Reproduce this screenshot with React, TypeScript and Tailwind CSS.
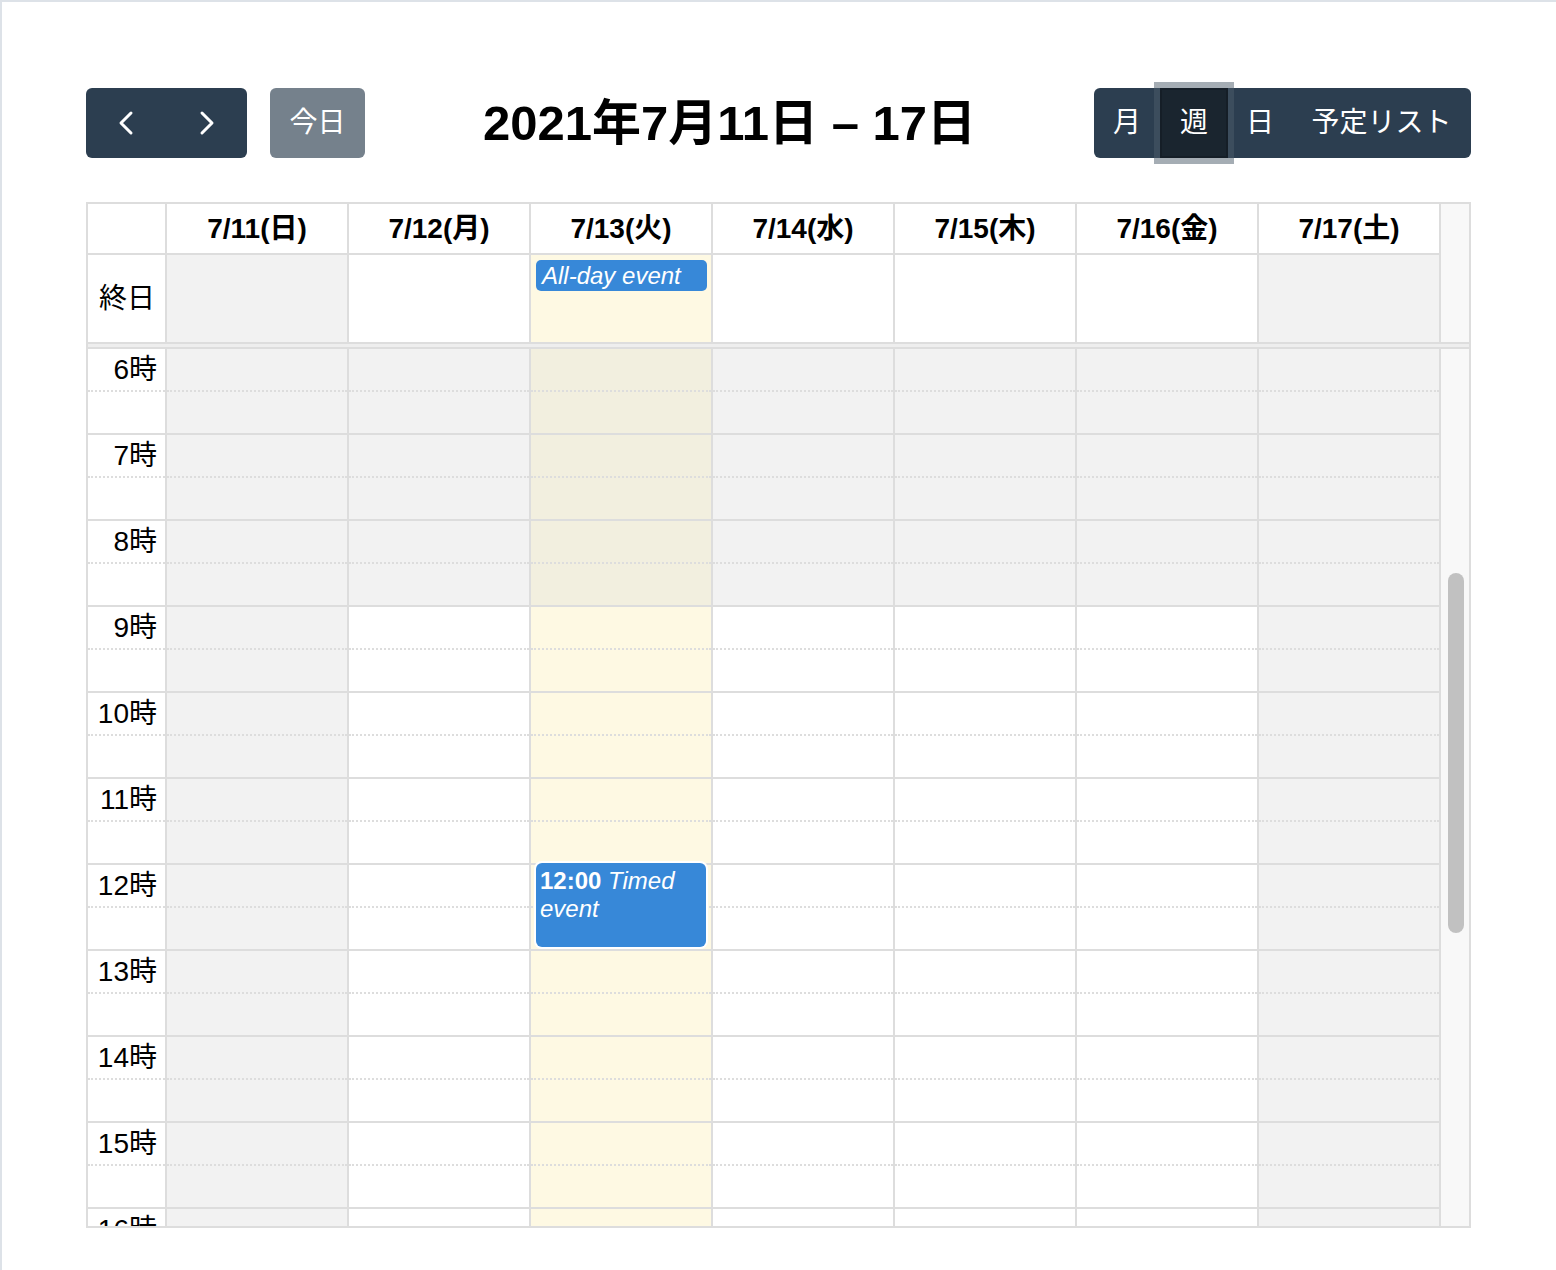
import type { ReactNode } from "react";

type Day = { label: string; weekend?: boolean; today?: boolean };

const days: Day[] = [
  { label: "7/11(日)", weekend: true },
  { label: "7/12(月)" },
  { label: "7/13(火)", today: true },
  { label: "7/14(水)" },
  { label: "7/15(木)" },
  { label: "7/16(金)" },
  { label: "7/17(土)", weekend: true },
];

// half-hour slots from 6:00, the body is clipped at the bottom
const slots = Array.from({ length: 26 }, (_, i) => ({ hour: 6 + Math.floor(i / 2), half: i % 2 === 1, index: i }));

function slotLine(index: number, half: boolean) {
  if (index === 0) return "h-[41px]";
  return half ? "h-[43px] border-t-2 border-dotted border-[#dddddd]" : "h-[43px] border-t-2 border-solid border-[#dddddd]";
}

function slotBg(day: Day, hour: number) {
  const off = day.weekend || hour < 9;
  if (day.today) return off ? "bg-[#f2efdf]" : "bg-[#fef9e3]";
  return off ? "bg-[#f2f2f2]" : "bg-white";
}

function allDayBg(day: Day) {
  if (day.today) return "bg-[#fef9e3]";
  return day.weekend ? "bg-[#f2f2f2]" : "bg-white";
}

function Chevron({ dir }: { dir: "left" | "right" }) {
  return (
    <svg width="16" height="26" viewBox="0 0 16 26" fill="none" aria-hidden>
      <polyline
        points={dir === "left" ? "13,3 3,13 13,23" : "3,3 13,13 3,23"}
        stroke="white"
        strokeWidth="3"
        strokeLinecap="round"
        strokeLinejoin="round"
      />
    </svg>
  );
}

function ViewButton({ children, className }: { children: ReactNode; className: string }) {
  return <button type="button" className={`flex h-[70px] items-center justify-center ${className}`}>{children}</button>;
}

export default function App() {
  return (
    <div className="min-h-[1270px] border-l-2 border-t-2 border-[#dde2e8] bg-white font-['Liberation_Sans','Noto_Sans_CJK_JP',sans-serif] text-black">
      <div className="ml-[84px] w-[1385px] pt-[86px]">
        {/* toolbar */}
        <div className="flex h-[70px] items-center justify-between">
          <div className="flex items-center">
            <div className="flex h-[70px] rounded-[6px] bg-[#2c3e50]">
              <button type="button" className="flex w-[80px] items-center justify-center" aria-label="prev">
                <Chevron dir="left" />
              </button>
              <button type="button" className="flex w-[81px] items-center justify-center" aria-label="next">
                <Chevron dir="right" />
              </button>
            </div>
            <button
              type="button"
              className="ml-[23px] flex h-[70px] w-[95px] items-center justify-center rounded-[6px] bg-[#2c3e50] text-[28px] text-white opacity-[0.65]"
            >
              今日
            </button>
          </div>

          <h2 className="text-[49px] font-bold leading-none">2021年7月11日 – 17日</h2>

          <div className="flex h-[70px] rounded-[6px] bg-[#2c3e50] text-[28px] text-white">
            <ViewButton className="w-[66px] rounded-l-[6px]">月</ViewButton>
            <ViewButton className="relative z-10 w-[68px] border-2 border-[#151e27] bg-[#1a252f] shadow-[0_0_0_6px_rgba(76,91,106,0.5)]">
              週
            </ViewButton>
            <ViewButton className="w-[64px]">日</ViewButton>
            <ViewButton className="w-[179px] rounded-r-[6px]">予定リスト</ViewButton>
          </div>
        </div>

        {/* calendar */}
        <div className="mt-[44px] border-2 border-[#dddddd]">
          <div className="grid grid-cols-[79px_repeat(7,182px)_1fr] grid-rows-[51px_87px]">
            <div className="border-b-2 border-r-2 border-[#dddddd]" />
            {days.map((d) => (
              <div
                key={d.label}
                className="flex items-center justify-center border-b-2 border-r-2 border-[#dddddd] text-[28px] font-bold"
              >
                {d.label}
              </div>
            ))}
            <div className="col-start-9 row-span-2 row-start-1 bg-[#f8f8f8]" />

            <div className="flex items-center justify-end border-r-2 border-[#dddddd] pr-[10px] text-[28px]">終日</div>
            {days.map((d) => (
              <div key={d.label} className={`border-r-2 border-[#dddddd] ${allDayBg(d)}`}>
                {d.today ? (
                  <div className="ml-[5px] mr-[4px] mt-[5px] h-[31px] truncate rounded-[5px] bg-[#3788d8] px-[6px] text-[24px] italic leading-[31px] text-white">
                    All-day event
                  </div>
                ) : null}
              </div>
            ))}
          </div>

          <div className="h-[7px] border-y-2 border-[#dddddd] bg-[#eeeeee]" />

          <div className="flex h-[877px] overflow-hidden">
            <div className="w-[79px] shrink-0 border-r-2 border-[#dddddd]">
              {slots.map((s) => (
                <div key={s.index} className={`${slotLine(s.index, s.half)} pr-[8px] text-right text-[28px] leading-[42px]`}>
                  {s.half ? null : `${s.hour}時`}
                </div>
              ))}
            </div>

            {days.map((d) => (
              <div key={d.label} className="relative w-[182px] shrink-0 border-r-2 border-[#dddddd]">
                {slots.map((s) => (
                  <div key={s.index} className={`${slotLine(s.index, s.half)} ${slotBg(d, s.hour)}`} />
                ))}
                {d.today ? (
                  <div className="absolute left-[5px] right-[5px] top-[514px] h-[84px] rounded-[6px] bg-[#3788d8] px-[4px] pt-[4px] text-[24px] leading-[28px] text-white shadow-[0_0_0_2px_#ffffff]">
                    <b>12:00</b> <i>Timed event</i>
                  </div>
                ) : null}
              </div>
            ))}

            <div className="flex-1 bg-[#f8f8f8] pl-[7px] pt-[224px]">
              <div className="h-[360px] w-[16px] rounded-full bg-[#c1c1c1]" />
            </div>
          </div>
        </div>
      </div>
    </div>
  );
}
